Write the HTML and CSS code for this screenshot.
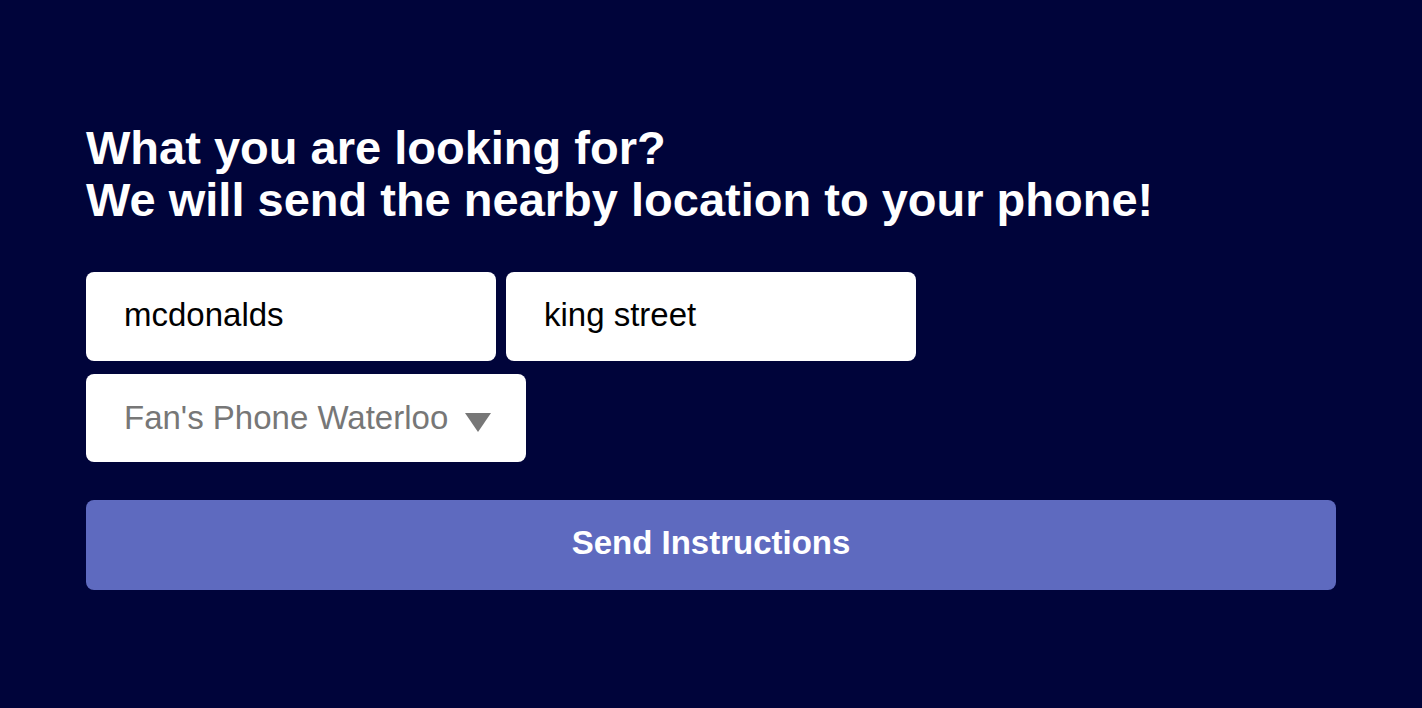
FILE: index.html
```html
<!DOCTYPE html>
<html lang="en">
<head>
<meta charset="utf-8">
<title>Find nearby</title>
<link rel="stylesheet" href="styles.css">
</head>
<body>
<main class="page">
  <form class="finder">
    <h1 class="title">What you are looking for?<br>We will send the nearby location to your phone!</h1>
    <div class="row">
      <input class="field" type="text" value="mcdonalds">
      <input class="field" type="text" value="king street">
    </div>
    <div class="row">
      <div class="select">
        <span class="select-text">Fan's Phone Waterloo</span>
        <svg class="select-arrow" width="26" height="19" viewBox="0 0 26 19"><polygon points="0,0 26,0 13,19" fill="#777777"/></svg>
      </div>
    </div>
    <button class="send" type="button">Send Instructions</button>
  </form>
</main>
</body>
</html>
```

FILE: styles.css
```css
html, body {
  margin: 0;
  padding: 0;
  background: #00043a;
  height: 100%;
}
body {
  font-family: "Liberation Sans", Arial, Helvetica, sans-serif;
}
.page {
  padding: 122px 86px 0 86px;
}
.finder {
  display: flex;
  flex-direction: column;
}
.title {
  margin: 0 0 46px 0;
  color: #ffffff;
  font-size: 47px;
  font-weight: 700;
  line-height: 52px;
}
.row {
  display: flex;
  gap: 10px;
  margin-bottom: 13px;
}
.field {
  box-sizing: border-box;
  width: 410px;
  height: 89px;
  border: none;
  border-radius: 8px;
  background: #ffffff;
  padding: 0 38px 4px 38px;
  font-family: "Liberation Sans", Arial, Helvetica, sans-serif;
  font-size: 33px;
  color: #000000;
  outline: none;
}
.select {
  box-sizing: border-box;
  width: 440px;
  height: 88px;
  border-radius: 8px;
  background: #ffffff;
  padding: 0 0 0 38px;
  display: flex;
  align-items: center;
  gap: 17px;
}
.select-text {
  font-size: 33px;
  color: #777777;
  white-space: nowrap;
  flex-shrink: 0;
}
.select-arrow {
  flex-shrink: 0;
  margin-top: 9px;
}
.send {
  margin-top: 25px;
  width: 1250px;
  height: 90px;
  border: none;
  border-radius: 8px;
  background: #5e6abf;
  color: #ffffff;
  font-family: "Liberation Sans", Arial, Helvetica, sans-serif;
  font-size: 33px;
  font-weight: 700;
  padding: 0 0 4px 0;
}
```
